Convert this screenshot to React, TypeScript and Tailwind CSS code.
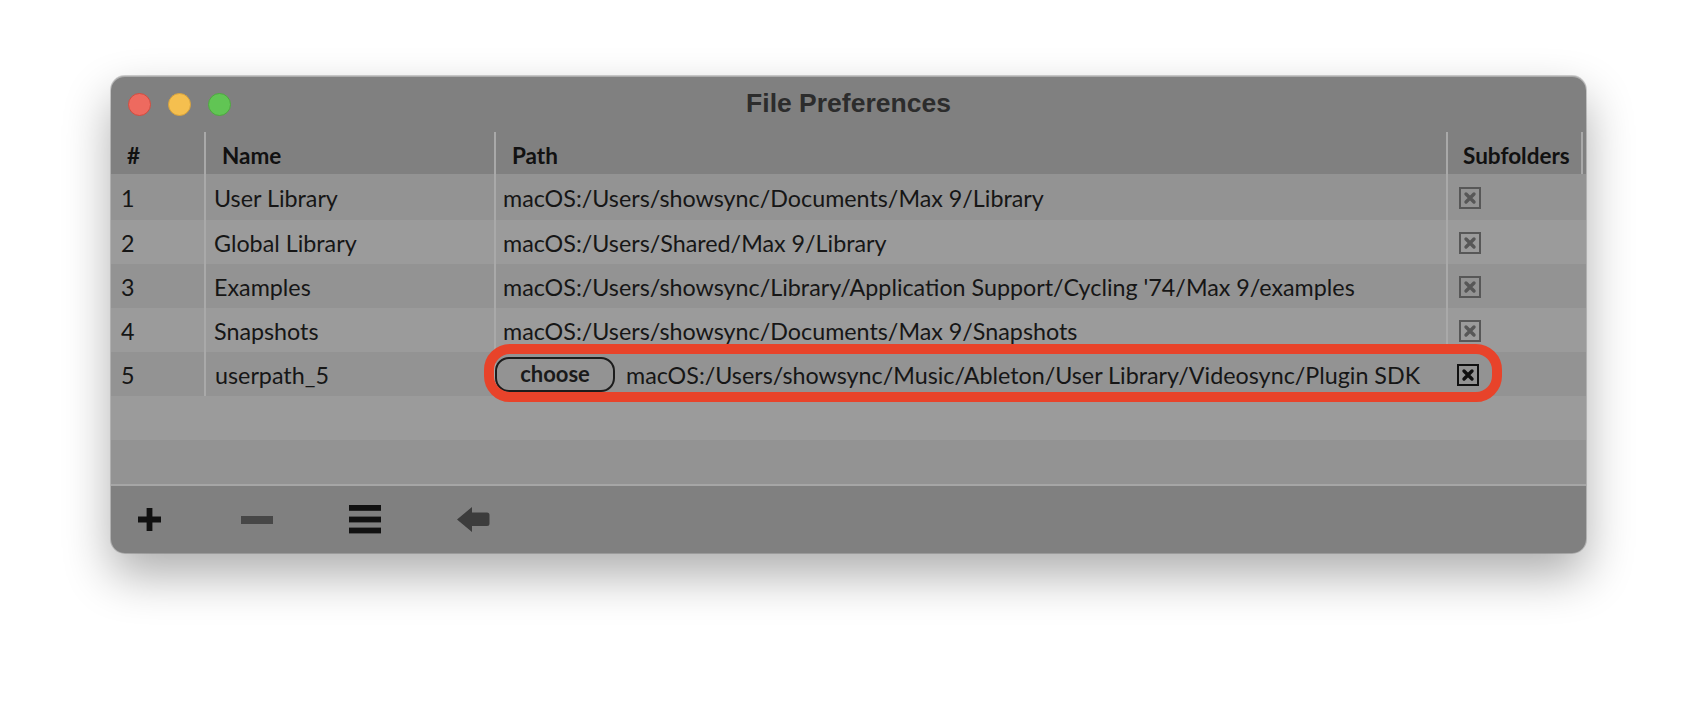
import React from "react";

const rows = [
  { n: "1", name: "User Library", path: "macOS:/Users/showsync/Documents/Max 9/Library" },
  { n: "2", name: "Global Library", path: "macOS:/Users/Shared/Max 9/Library" },
  { n: "3", name: "Examples", path: "macOS:/Users/showsync/Library/Application Support/Cycling '74/Max 9/examples" },
  { n: "4", name: "Snapshots", path: "macOS:/Users/showsync/Documents/Max 9/Snapshots" },
];

function Check({ dark }: { dark?: boolean }) {
  const c = dark ? "#111111" : "#575757";
  return (
    <svg width="22" height="22" viewBox="0 0 22 22">
      <rect x="1" y="1" width="20" height="20" fill="none" stroke={c} strokeWidth="2" />
      <path d="M7 7 L15 15 M15 7 L7 15" stroke={c} strokeWidth="3.4" strokeLinecap="round" />
    </svg>
  );
}

export default function App() {
  return (
    <div className="w-[1698px] h-[702px] bg-white pt-[76px] pl-[111px] font-[Lato,sans-serif]">
      <div className="w-[1475px] h-[477px] bg-[#808080] rounded-[14px] overflow-hidden flex flex-col shadow-[0_22px_48px_rgba(0,0,0,0.32),0_0_0_1px_rgba(0,0,0,0.18),inset_0_1px_0_rgba(255,255,255,0.35)]">
        {/* title bar */}
        <div className="h-[56px] shrink-0 grid grid-cols-[1fr_auto_1fr] items-center">
          <div className="flex items-center gap-[17px] pl-[17px]">
            <div className="w-[23px] h-[23px] rounded-full bg-[#ee6a5f] border border-[#d24c40]" />
            <div className="w-[23px] h-[23px] rounded-full bg-[#f5bf4f] border border-[#d7a23c]" />
            <div className="w-[23px] h-[23px] rounded-full bg-[#61c554] border border-[#4ea840]" />
          </div>
          <div className="font-['Liberation_Sans',Arial,sans-serif] text-[26.5px] font-bold text-[#2c2c2c] leading-normal">
            File Preferences
          </div>
          <div />
        </div>
        {/* header */}
        <div className="h-[42px] shrink-0 grid grid-cols-[93px_290px_952px_135px_1fr] text-[22.5px] font-bold text-[#111]">
          <div className="flex items-center pl-[16px] pt-[5px]">#</div>
          <div className="flex items-center pl-[16px] pt-[5px] border-l-2 border-[#a9a9a9]">Name</div>
          <div className="flex items-center pl-[16px] pt-[5px] border-l-2 border-[#a9a9a9]">Path</div>
          <div className="flex items-center pl-[15px] pt-[5px] border-l-2 border-[#a9a9a9]">Subfolders</div>
          <div className="border-l-2 border-[#a9a9a9]" />
        </div>
        {/* rows */}
        <div className="flex flex-col text-[23.3px] text-[#161616]">
          {rows.map((r, i) => (
            <div
              key={r.n}
              className={
                "grid grid-cols-[93px_290px_952px_1fr] " +
                (i === 0 ? "h-[46px] " : "h-[44px] ") +
                (i % 2 === 0 ? "bg-[#939393]" : "bg-[#9b9b9b]")
              }
            >
              <div className="flex items-center pl-[10px] pt-[2px]">{r.n}</div>
              <div className="flex items-center pl-[8px] pt-[2px] border-l-2 border-[#a9a9a9]">{r.name}</div>
              <div className="flex items-center pl-[7px] pt-[2px] border-l-2 border-[#a9a9a9] whitespace-nowrap">{r.path}</div>
              <div className="flex items-center pl-[11px] pt-[2px] border-l-2 border-[#a9a9a9]">
                <Check />
              </div>
            </div>
          ))}
          <div className="relative h-[44px] grid grid-cols-[93px_290px_952px_1fr] bg-[#939393]">
            <div className="flex items-center pl-[10px] pt-[2px]">5</div>
            <div className="flex items-center pl-[9px] pt-[2px] border-l-2 border-[#a9a9a9]">userpath_5</div>
            <div className="flex items-center border-l-2 border-[#a9a9a9] whitespace-nowrap">
              <div className="-ml-[1px] w-[120px] h-[35px] rounded-[14px] border-2 border-[#1c1c1c] flex items-center justify-center text-[22px] font-bold text-[#1a1a1a] pb-[1px]">
                choose
              </div>
              <span className="ml-[11px] pt-[2px]">macOS:/Users/showsync/Music/Ableton/User Library/Videosync/Plugin SDK</span>
            </div>
            <div className="flex items-center pl-[11px] pt-[2px]">
              <Check dark />
            </div>
            <div className="absolute left-[373px] top-[-8px] w-[1018px] h-[58px] border-[10px] border-[#e8432a] rounded-[26px] pointer-events-none" />
          </div>
          <div className="h-[44px] bg-[#9b9b9b]" />
          <div className="h-[44px] bg-[#939393]" />
        </div>
        <div className="h-[2px] shrink-0 bg-[#a6a6a6]" />
        {/* footer */}
        <div className="flex-1 flex items-center">
          <svg className="ml-[27px]" width="23" height="23" viewBox="0 0 23 23">
            <rect x="0" y="8.5" width="23" height="6" fill="#111" />
            <rect x="8.6" y="0" width="5.8" height="23" fill="#111" />
          </svg>
          <svg className="ml-[80px]" width="32" height="8" viewBox="0 0 32 8">
            <rect x="0" y="0" width="32" height="8" fill="#474747" />
          </svg>
          <svg className="ml-[76px]" width="32" height="29" viewBox="0 0 32 29">
            <rect x="0" y="0" width="32" height="5.8" fill="#111" />
            <rect x="0" y="11.6" width="32" height="5.8" fill="#111" />
            <rect x="0" y="22.6" width="32" height="5.8" fill="#111" />
          </svg>
          <svg className="ml-[76px]" width="33" height="25" viewBox="0 0 33 25">
            <path d="M0 12.5 L15 0 L15 5.5 L30 5.5 Q32.5 5.5 32.5 8 L32.5 16.5 Q32.5 19 30 19 L15 19 L15 25 Z" fill="#3c3c3c" />
          </svg>
        </div>
      </div>
    </div>
  );
}
